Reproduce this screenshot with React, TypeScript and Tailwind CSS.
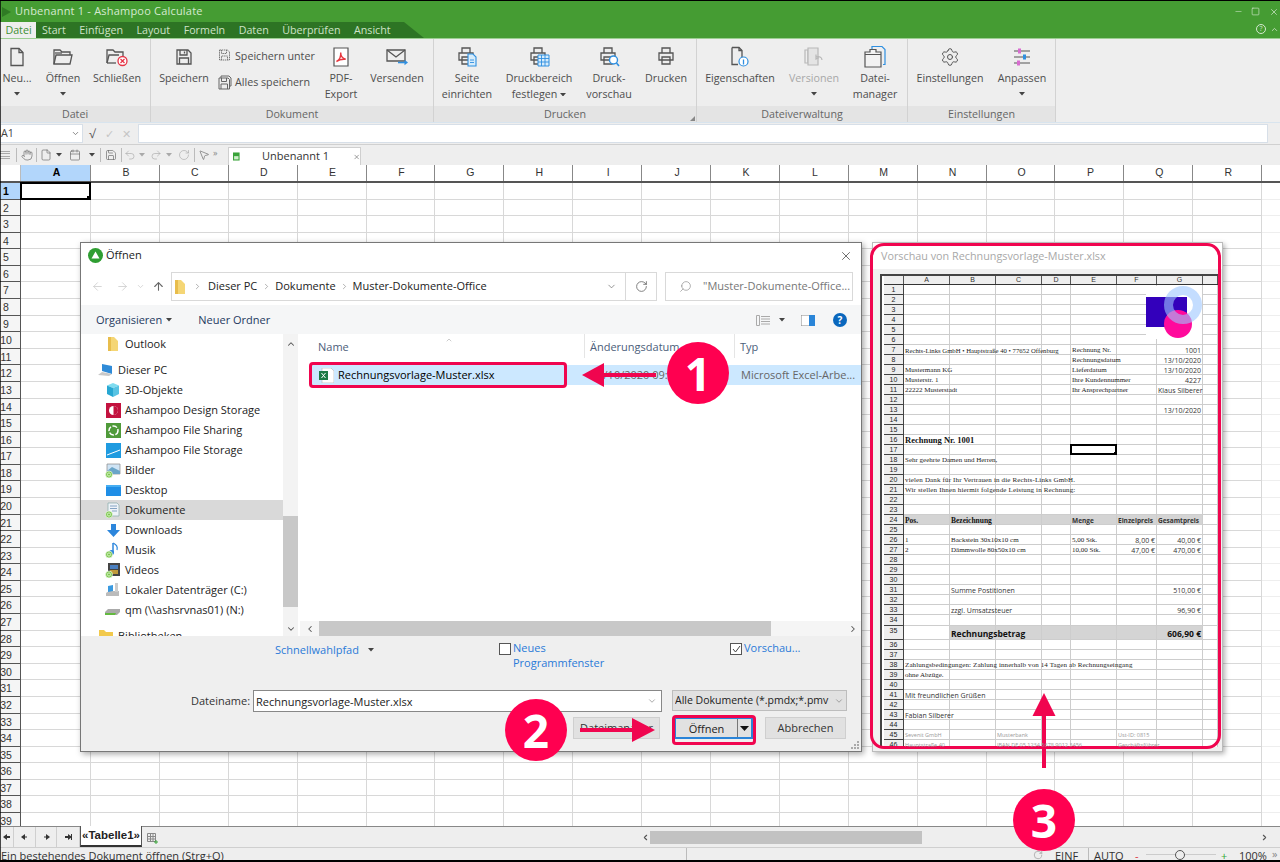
import React from "react";
import { ArrowLeft, ArrowRight, ArrowUp, ChevronDown, ChevronLeft, ChevronRight, ChevronUp, RotateCw, Search, Settings, X, Minus, Square, Undo2, Redo2, Hand, File as FileIcon, Calendar, Save, MousePointer2 } from "lucide-react";

const S = { fill: "none", stroke: "#555", strokeWidth: 1.3 };

function Caret({ className = "" }: { className?: string }) {
  return <svg width="6" height="3.5" viewBox="0 0 7 4" className={className}><path d="M0 0h7L3.5 4z" fill="#444" /></svg>;
}

function IcNew() {
  return <svg width="20" height="20" viewBox="0 0 20 20" {...S}><path d="M4 1.5h8l4 4v13H4z" /><path d="M12 1.5v4h4" /></svg>;
}
function IcOpen() {
  return <svg width="22" height="20" viewBox="0 0 22 20" {...S}><path d="M2 17V3h6l2 2h8v3" /><path d="M2 17l2-9h16l-2 9z" /><path d="M3 6h7" /></svg>;
}
function IcClose() {
  return <svg width="24" height="20" viewBox="0 0 24 20"><g {...S}><path d="M2 16V3h6l2 2h8v5" /><path d="M2 16l2-8h10" /><path d="M2 16h9" /></g><circle cx="17.5" cy="14" r="4.5" fill="#fff" stroke="#e53345" strokeWidth="1.3" /><path d="M15.5 12l4 4M19.5 12l-4 4" stroke="#e53345" strokeWidth="1.2" /></svg>;
}
function IcSave({ size = 18 }: { size?: number }) {
  return <svg width={size} height={size} viewBox="0 0 18 18" {...S}><path d="M2 2h11l3 3v11H2z" /><path d="M5 2v5h7V2M4.5 16v-6h9v6" /><path d="M9.5 3.5v2" /></svg>;
}
function IcSaveAs() {
  return <svg width="14" height="14" viewBox="0 0 14 14" fill="none" stroke="#777" strokeWidth="1" strokeDasharray="1.5 0.7"><path d="M1.5 1h8l2 2v8h-10z" /><path d="M3.5 1v3.5h5V1M3.5 11V7h6v4" /></svg>;
}
function IcSaveAll() {
  return <svg width="15" height="15" viewBox="0 0 15 15" fill="none" stroke="#666" strokeWidth="1"><path d="M3 3V1h8l2 2v8h-2" /><path d="M1 3h9l1.5 1.5V14H1z" /><path d="M3.5 3v3.5h5V3M3 14V9h6.5v5" /></svg>;
}
function IcPdf() {
  return <svg width="16" height="20" viewBox="0 0 16 20"><path d="M1 1h14v18H1z" fill="#fff" stroke="#555" strokeWidth="1.2" /><path d="M3.5 14.5c3-1.5 4.5-5 4.2-9 0 3 1.6 6 5 6.8-3-.3-6.8.5-9.2 2.2z" fill="none" stroke="#e8373f" strokeWidth="1.4" /></svg>;
}
function IcMail() {
  return <svg width="24" height="20" viewBox="0 0 24 20"><g {...S}><path d="M2 3h18v11H2z" /><path d="M2 3l9 7 9-7" /></g><path d="M13 15.5h8" stroke="#2f8fe0" strokeWidth="1.6" /><path d="M19.5 12.8l3.5 2.7-3.5 2.7z" fill="#2f8fe0" /></svg>;
}
function PrinterBase() {
  return <g {...S}><path d="M6 7V2h8v5" /><path d="M3 7h14v7H3z" /><path d="M6 11h8v7H6z" /></g>;
}
function IcPrintPage() {
  return <svg width="22" height="22" viewBox="0 0 22 22"><PrinterBase /><path d="M12 8h5l3 3v9h-8z" fill="#d6ecfb" stroke="#2f8fe0" strokeWidth="1.1" /><path d="M14 14h4M14 16.5h4" stroke="#2f8fe0" strokeWidth=".9" /></svg>;
}
function IcPrintArea() {
  return <svg width="22" height="22" viewBox="0 0 22 22"><PrinterBase /><path d="M10 9h11v11H10z" fill="#d6ecfb" stroke="#2f8fe0" strokeWidth="1" /><path d="M13.5 9v11M17 9v11M10 12.5h11M10 16h11" stroke="#2f8fe0" strokeWidth=".9" /></svg>;
}
function IcPrintPreview() {
  return <svg width="22" height="22" viewBox="0 0 22 22"><PrinterBase /><circle cx="15.5" cy="14" r="4" fill="#fff" stroke="#2f8fe0" strokeWidth="1.4" /><path d="M18.5 17l2.5 3" stroke="#2f8fe0" strokeWidth="1.6" /></svg>;
}
function IcPrint() {
  return <svg width="20" height="22" viewBox="0 0 20 22"><PrinterBase /></svg>;
}
function IcProps() {
  return <svg width="22" height="22" viewBox="0 0 22 22"><g {...S}><path d="M3 1.5h7l3 3v9M3 1.5v17h6" /><path d="M10 1.5v3h3" /></g><circle cx="14.5" cy="15.5" r="4.5" fill="#fff" stroke="#2f8fe0" strokeWidth="1.2" /><path d="M14.5 13.5v5" stroke="#2f8fe0" strokeWidth="1.3" /></svg>;
}
function IcVersions() {
  return <svg width="22" height="22" viewBox="0 0 22 22" fill="none" stroke="#b8b8b8" strokeWidth="1.2"><path d="M2 4h3v13H2z" /><path d="M5 2h10v17H5z" fill="#e4e4e4" /><path d="M19 14c0-3-3-4-6-3M13 8.5V13l3-1.5" /></svg>;
}
function IcFileMgr() {
  return <svg width="24" height="24" viewBox="0 0 24 24" fill="none"><path d="M9 4V1.5h10l3 3v15h-2" stroke="#2f8fe0" strokeWidth="1.2" /><path d="M2 7h5V4.5h6V7h5v15H2z" stroke="#555" strokeWidth="1.2" fill="#f2f2f2" /><path d="M2 9.5h16" stroke="#555" strokeWidth="1" /></svg>;
}
function IcSliders() {
  return <svg width="20" height="20" viewBox="0 0 20 20"><path d="M2 4h16M2 10h16M2 16h16" stroke="#555" strokeWidth="1.2" /><rect x="6" y="1.5" width="3" height="5" fill="#d86cd0" /><rect x="11" y="7.5" width="3" height="5" fill="#2f8fe0" /><rect x="5" y="13.5" width="3" height="5" fill="#d86cd0" /></svg>;
}

function RB({ w, icon, l1, l2, caret, disabled, ml }: { w: string; icon: React.ReactNode; l1: string; l2?: React.ReactNode; caret?: boolean; disabled?: boolean; ml?: string }) {
  return (
    <div className={`${w} ${ml ?? ""} flex flex-col items-center pt-[7px] shrink-0`}>
      <div className="h-[22px] flex items-center justify-center">{icon}</div>
      <div className={`mt-[3px] text-center text-[10.7px] leading-[15.5px] whitespace-nowrap ${disabled ? "text-[#a8a8a8]" : "text-[#4d4d4d]"}`}>
        <div>{l1}</div>
        {l2 ? <div>{l2}</div> : caret ? <div className="flex justify-center items-center h-[15px]"><Caret /></div> : null}
      </div>
    </div>
  );
}

function Group({ w, label, children, grip }: { w: string; label: string; children: React.ReactNode; grip?: boolean }) {
  return (
    <div className={`${w} shrink-0 flex flex-col border-r border-[#d2d2d2] relative`}>
      <div className="h-[67px] flex">{children}</div>
      <div className="h-[16px] bg-[#e4e4e4] text-center text-[10.7px] leading-[16px] text-[#666]">{label}</div>
      {grip && <svg width="5" height="5" viewBox="0 0 5 5" className="absolute right-[1px] bottom-[1px]"><path d="M5 0v5H0z" fill="#888" /></svg>}
    </div>
  );
}

function Ribbon() {
  return (
    <div className="h-[84px] bg-[#eeeeee] flex shrink-0 border-t border-[#9ccf92]">
      <Group w="w-[151px]" label="Datei">
        <RB w="w-[32px]" ml="ml-[1px]" icon={<IcNew />} l1="Neu..." caret />
        <RB w="w-[60px]" icon={<IcOpen />} l1="Öffnen" caret />
        <RB w="w-[48px]" icon={<IcClose />} l1="Schließen" />
      </Group>
      <Group w="w-[283px]" label="Dokument">
        <RB w="w-[54px]" ml="ml-[6px]" icon={<IcSave />} l1="Speichern" />
        <div className="w-[99px] ml-[6px] flex flex-col pt-[4px] text-[10.7px] text-[#4d4d4d] shrink-0">
          <div className="h-[26px] flex items-center gap-[3px] whitespace-nowrap"><span className="w-[14px] ml-[1px]"><IcSaveAs /></span>Speichern unter</div>
          <div className="h-[26px] flex items-center gap-[3px] whitespace-nowrap"><span className="w-[14px] ml-[1px]"><IcSaveAll /></span>Alles speichern</div>
        </div>
        <RB w="w-[50px]" icon={<IcPdf />} l1="PDF-" l2="Export" />
        <RB w="w-[62px]" icon={<IcMail />} l1="Versenden" />
      </Group>
      <Group w="w-[263px]" label="Drucken" grip>
        <RB w="w-[54px]" ml="ml-[6px]" icon={<IcPrintPage />} l1="Seite" l2="einrichten" />
        <RB w="w-[90px]" icon={<IcPrintArea />} l1="Druckbereich" l2={<span className="inline-flex items-center gap-[3px]">festlegen <Caret /></span>} />
        <RB w="w-[50px]" icon={<IcPrintPreview />} l1="Druck-" l2="vorschau" />
        <RB w="w-[60px]" ml="ml-[2px]" icon={<IcPrint />} l1="Drucken" />
      </Group>
      <Group w="w-[211px]" label="Dateiverwaltung">
        <RB w="w-[82px]" ml="ml-[2px]" icon={<IcProps />} l1="Eigenschaften" />
        <RB w="w-[66px]" icon={<IcVersions />} l1="Versionen" caret disabled />
        <RB w="w-[56px]" icon={<IcFileMgr />} l1="Datei-" l2="manager" />
      </Group>
      <Group w="w-[148px]" label="Einstellungen">
        <RB w="w-[72px]" ml="ml-[6px]" icon={<Settings size={20} strokeWidth={1.2} color="#555" />} l1="Einstellungen" />
        <RB w="w-[60px]" ml="ml-[6px]" icon={<IcSliders />} l1="Anpassen" caret />
      </Group>
      <div className="flex-1" />
    </div>
  );
}

function Toolbar() {
  const ic = { size: 12, strokeWidth: 1.3, color: "#666" };
  const dim = { size: 12, strokeWidth: 1.3, color: "#aaa" };
  const Sep = ({ ml }: { ml: string }) => <div className={`w-px h-[14px] bg-[#bbb] shrink-0 ${ml}`} />;
  return (
    <div className="h-[21px] bg-[#eeeeee] border-t border-[#d0d0d0] flex items-center shrink-0 text-[#666]">
      <div className="w-[10px] h-[9px] flex flex-col justify-between shrink-0"><div className="h-px bg-[#aaa]" /><div className="h-px bg-[#aaa]" /><div className="h-px bg-[#aaa]" /><div className="h-px bg-[#aaa]" /></div>
      <Sep ml="ml-[6px]" />
      <div className="w-[19px] flex justify-center"><Hand {...ic} /></div>
      <Sep ml="" />
      <div className="w-[18px] flex justify-center"><FileIcon {...ic} /></div>
      <div className="w-[8px] flex justify-center"><Caret /></div>
      <div className="w-[22px] flex justify-center pl-[2px]"><Calendar {...ic} /></div>
      <div className="w-[3px]" />
      <div className="w-[8px] flex justify-center"><Caret /></div>
      <Sep ml="ml-[4px]" />
      <div className="w-[20px] flex justify-center"><Save {...ic} /></div>
      <Sep ml="" />
      <div className="w-[16px] flex justify-center"><Undo2 {...dim} /></div>
      <div className="w-[8px] flex justify-center"><Caret className="opacity-40" /></div>
      <div className="w-[2px]" />
      <div className="w-[16px] flex justify-center"><Redo2 {...dim} /></div>
      <div className="w-[9px] flex justify-center"><Caret className="opacity-40" /></div>
      <div className="w-[21px] flex justify-center"><RotateCw {...dim} /></div>
      <Sep ml="" />
      <div className="w-[17px] flex justify-center"><MousePointer2 {...ic} /></div>
      <span className="text-[9px] leading-none -mt-[6px] ml-[1px] text-[#888]">»</span>
      <div className="ml-[11px] self-end w-[133px] h-[18px] bg-white border border-b-0 border-[#cfcfcf] flex items-center">
        <svg width="9" height="11" viewBox="0 0 9 11" className="ml-[4px]"><path d="M0 0h9v11H0z" fill="#3aa33a" /><path d="M1.5 5h6v4.5h-6z" fill="#cfeecb" /></svg>
        <span className="ml-[22px] text-[11px] text-[#333] whitespace-nowrap">Unbenannt 1</span>
        <X size={10} strokeWidth={1.8} color="#555" className="ml-[24px]" />
      </div>
    </div>
  );
}

const COLS = "ABCDEFGHIJKLMNOPQR".split("");
const SHEET_GRID = "grid grid-cols-[21px_70px_repeat(17,68.9px)_1fr]";

function Sheet() {
  const rows = Array.from({ length: 39 }, (_, i) => i + 1);
  return (
    <div className="flex-1 flex flex-col bg-white min-h-0 overflow-hidden font-['Liberation_Sans',sans-serif]">
      <div className={`h-[18px] shrink-0 ${SHEET_GRID} border-b-2 border-[#555] bg-white text-[10.5px] text-[#333]`}>
        <div className="border-r border-[#bbb]" />
        {COLS.map((c) => (
          <div key={c} className={`text-center pl-[2px] leading-[15px] border-r border-[#888] ${c === "A" ? "bg-[#b2d6fb] font-bold text-black" : ""}`}>{c}</div>
        ))}
        <div />
      </div>
      <div className={`flex-1 ${SHEET_GRID} grid-rows-[repeat(39,16.58px)] min-h-0 text-[10.5px]`}>
        {rows.map((r) => (
          <React.Fragment key={r}>
            <div className={`border-b border-r border-[#555] leading-[16px] overflow-hidden ${r === 1 ? "bg-[#b2d6fb] font-bold text-black" : "bg-[#f5f5f5] text-[#333]"}`}>
              <div className="w-[12px] text-center">{r}</div>
            </div>
            {COLS.map((c) => (
              <div key={c} className="border-b border-r border-[#d8d8d8] relative">
                {r === 1 && c === "A" && <div className="absolute -inset-[1px] border-2 border-black"><div className="absolute -right-[2px] -bottom-[2px] w-[4px] h-[4px] bg-black" /></div>}
              </div>
            ))}
            <div className="border-b border-[#eee]" />
          </React.Fragment>
        ))}
      </div>
    </div>
  );
}

function SheetTabs() {
  const widths = ["w-[14px]", "w-[22px]", "w-[21px]", "w-[23px]"];
  return (
    <>
      <div className="h-[21px] shrink-0 bg-[#eeeeee] border-t border-[#888] flex items-stretch relative">
        {widths.map((w, i) => (
          <div key={i} className={`${w} border-r border-[#cfcfcf] flex items-center justify-center`}>
            <svg width="7" height="6" viewBox="0 0 7 6">
              {i < 2 ? <path d="M0 3l4-3v6z" fill="#333" /> : <path d="M7 3l-4-3v6z" fill="#333" />}
              {i === 0 && <path d="M4 2h3v2H4z" fill="#333" />}
              {i === 1 && <path d="M4 2.5h2v1H4z" fill="#333" />}
              {i === 2 && <path d="M1 2.5h2v1H1z" fill="#333" />}
              {i === 3 && <path d="M0 2h3v2H0z M6 0h1v6H6z" fill="#333" />}
            </svg>
          </div>
        ))}
        <div className="w-[62px] bg-white border-x border-[#555] border-b-2 border-b-[#333] text-[11.5px] font-bold text-center leading-[18px] text-[#222] -mt-px font-['Liberation_Sans',sans-serif] whitespace-nowrap">«Tabelle1»</div>
        <svg width="11" height="11" viewBox="0 0 11 11" className="ml-[5px] mt-[6px]" fill="none" stroke="#888"><path d="M.5.5h8v8h-8zM.5 3.5h8M.5 6h8M3.5.5v8M6 .5v8" /><path d="M9 7v4M7 9h4" stroke="#3aa33a" /></svg>
        <div className="absolute left-[640px] top-[4px] w-[630px] h-[13px] flex items-center">
          <ChevronLeft size={9} strokeWidth={3} color="#555" className="ml-[1px]" />
          <div className="w-[272px] h-[13px] bg-[#c2c2c2]" />
          <ChevronRight size={9} strokeWidth={3} color="#555" className="ml-auto mr-[1px]" />
        </div>
      </div>
      <div className="h-[15px] shrink-0 bg-[#eeeeee] border-t border-[#cfcfcf] border-b-2 border-b-black flex items-start relative overflow-hidden text-[11px] text-[#333] leading-[15px] whitespace-nowrap">
        <span className="ml-[1px]">Ein bestehendes Dokument öffnen (Strg+O)</span>
        <div className="absolute left-[686px] top-0 w-px h-full bg-[#bbb]" />
        <RotateCw size={10} color="#aaa" className="absolute left-[1033px] top-[2px]" />
        <span className="absolute left-[1055px] top-0">EINF</span>
        <div className="absolute left-[1088px] top-0 w-px h-full bg-[#bbb]" />
        <span className="absolute left-[1094px] top-0">AUTO</span>
        <span className="absolute left-[1135px] top-0 text-[#d34]">-</span>
        <div className="absolute left-[1146px] top-[6px] w-[70px] h-px bg-[#ccc]" />
        <div className="absolute left-[1175px] top-[2px] w-[10px] h-[10px] rounded-full border-[1.5px] border-[#555] bg-[#eee]" />
        <span className="absolute left-[1221px] top-0 text-[#3a3]">+</span>
        <span className="absolute left-[1239px] top-0">100%</span>
        <span className="absolute left-[1272px] -top-[2px] text-[#888]">»</span>
      </div>
    </>
  );
}

function NavItem({ icon, label, selected, indent = "pl-[24px]" }: { icon: React.ReactNode; label: string; selected?: boolean; indent?: string }) {
  return (
    <div className={`h-[20px] flex items-center ${indent} text-[11px] text-[#222] whitespace-nowrap ${selected ? "bg-[#d9d9d9]" : ""}`}>
      <div className="w-[16px] h-[16px] flex items-center justify-center shrink-0 mr-[4px]">{icon}</div>
      {label}
    </div>
  );
}

const Sync = () => (
  <g>
    <circle cx="4" cy="12.5" r="3.5" fill="#7ec850" stroke="#fff" strokeWidth=".6" />
    <circle cx="4" cy="12.5" r="1.6" fill="none" stroke="#e9f7df" strokeWidth=".8" />
  </g>
);
const NavIc = {
  folder: <svg width="12" height="16" viewBox="0 0 12 16"><path d="M1 1h6l4 4v10H1z" fill="#f5d675" /><path d="M1 1h3v14H1z" fill="#e8bd4c" /></svg>,
  pc: <svg width="16" height="16" viewBox="0 0 16 16"><path d="M4 2l10 2v8L4 9z" fill="#2f8bd8" /><path d="M0 13l4-3 10 2-3 2z" fill="#c8c8c8" /></svg>,
  cube: <svg width="16" height="16" viewBox="0 0 16 16"><path d="M8 1l6 2.5L8 6 2 3.5z" fill="#7fdcf0" /><path d="M2 3.5L8 6v9l-6-3z" fill="#27a7d2" /><path d="M14 3.5L8 6v9l6-3z" fill="#58c3e3" /></svg>,
  design: <svg width="15" height="15" viewBox="0 0 15 15"><path d="M0 0h15v15H0z" fill="#c3123f" /><circle cx="7.5" cy="7.5" r="4.5" fill="#fff" /><path d="M7.5 3a4.5 4.5 0 0 1 0 9z" fill="#c3123f" /></svg>,
  share: <svg width="15" height="15" viewBox="0 0 15 15"><path d="M0 0h15v15H0z" fill="#4f9a3a" /><circle cx="7.5" cy="7.5" r="4.5" fill="none" stroke="#fff" strokeWidth="1.5" strokeDasharray="5 1.5" /></svg>,
  store: <svg width="15" height="15" viewBox="0 0 15 15"><path d="M0 0h15v15H0z" fill="#1f9be0" /><path d="M1 12L14 7" stroke="#fff" strokeWidth="1" /></svg>,
  pics: <svg width="16" height="16" viewBox="0 0 16 16"><path d="M2 2h13v10H2z" fill="#cfe4f5" stroke="#888" strokeWidth=".7" /><path d="M2 9l5-4 8 4v3H2z" fill="#6aa5c8" /><Sync /></svg>,
  desktop: <svg width="15" height="15" viewBox="0 0 15 15"><path d="M0 2h15v11H0z" fill="#1f8ee6" /><path d="M0 2h15v2H0z" fill="#47aef2" /></svg>,
  docs: <svg width="16" height="16" viewBox="0 0 16 16"><path d="M3 1h9l2 2v11H3z" fill="#eef3f8" stroke="#8aa" strokeWidth=".7" /><path d="M5 4h7M5 6.5h7M7 9h5" stroke="#6a8fb5" strokeWidth=".8" /><Sync /></svg>,
  down: <svg width="15" height="15" viewBox="0 0 15 15"><path d="M5 1h5v6h4l-6.5 7L1 7h4z" fill="#2c86dc" /></svg>,
  music: <svg width="16" height="16" viewBox="0 0 16 16"><path d="M8 1v10" stroke="#2c86dc" strokeWidth="1.5" /><path d="M8 1c3 2 5 3 4 7" fill="none" stroke="#2c86dc" strokeWidth="1.2" /><circle cx="6.5" cy="10.5" r="2.5" fill="#2c86dc" /><Sync /></svg>,
  video: <svg width="16" height="16" viewBox="0 0 16 16"><path d="M3 1h12v13H3z" fill="#444" /><path d="M5 3h8v4H5z" fill="#4a7fc0" /><path d="M5 8h8v4H5z" fill="#c09a3a" /><Sync /></svg>,
  disk: <svg width="16" height="16" viewBox="0 0 16 16"><path d="M1 11l3-2h10v5H1z" fill="#bbb" /><path d="M10 1h3v9h-3z" fill="#ccc" /><path d="M3 4l5-1v6l-5 1z" fill="#3a9ae0" /></svg>,
  net: <svg width="16" height="16" viewBox="0 0 16 16"><path d="M0 10l3-3h12v3l-3 3H0z" fill="#aaa" /><path d="M0 11h11l-1 2H0z" fill="#63b93f" /></svg>,
};

function OpenDialog() {
  return (
    <div className="absolute left-[80px] top-[242px] w-[782px] h-[510px] bg-white border border-[#777] shadow-[2px_2px_6px_rgba(0,0,0,0.35)] flex flex-col font-['Open_Sans',sans-serif] text-[11px] text-[#222] overflow-hidden">
      <div className="h-[25px] shrink-0 flex items-center pl-[7px] pr-[8px]">
        <svg width="15" height="15" viewBox="0 0 15 15"><circle cx="7.5" cy="7.5" r="7.5" fill="#2f9e32" /><path d="M7.5 3.5l4 7h-8z" fill="#fff" /></svg>
        <span className="ml-[3px]">Öffnen</span>
        <X size={14} strokeWidth={1.2} color="#333" className="ml-auto" />
      </div>
      <div className="h-[37px] shrink-0 flex items-center pl-[10px] pr-[8px]">
        <ArrowLeft size={13} color="#ccc" strokeWidth={1.5} />
        <ArrowRight size={13} color="#ccc" strokeWidth={1.5} className="ml-[12px]" />
        <ChevronDown size={9} color="#ccc" strokeWidth={2} className="ml-[7px]" />
        <ArrowUp size={13} color="#666" strokeWidth={2} className="ml-[7px]" />
        <div className="ml-[6px] w-[486px] h-[29px] border border-[#d9d9d9] flex items-center">
          <div className="flex-1 flex items-center pl-[3px] min-w-0">
            <svg width="10" height="14" viewBox="0 0 10 14"><path d="M0 0h6l4 4v10H0z" fill="#f5d675" /><path d="M0 0h3v14H0z" fill="#e8bd4c" /></svg>
            <ChevronRight size={9} color="#777" strokeWidth={1.5} className="ml-[8px]" />
            <span className="ml-[6px]">Dieser PC</span>
            <ChevronRight size={9} color="#777" strokeWidth={1.5} className="ml-[5px]" />
            <span className="ml-[4px]">Dokumente</span>
            <ChevronRight size={9} color="#777" strokeWidth={1.5} className="ml-[4px]" />
            <span className="ml-[4px]">Muster-Dokumente-Office</span>
          </div>
          <ChevronDown size={11} color="#666" strokeWidth={1.5} className="mr-[8px]" />
          <div className="w-[31px] h-full border-l border-[#d9d9d9] flex items-center justify-center"><RotateCw size={13} color="#666" strokeWidth={1.5} /></div>
        </div>
        <div className="ml-[8px] w-[188px] h-[29px] border border-[#d9d9d9] flex items-center pl-[13px] text-[#777] whitespace-nowrap overflow-hidden">
          <Search size={13} color="#888" strokeWidth={1.2} className="-scale-x-100" />
          <span className="ml-[11px]">"Muster-Dokumente-Office...</span>
        </div>
      </div>
      <div className="h-[29px] shrink-0 bg-[#f5f6f7] flex items-center pl-[15px] pr-[14px] pt-[1px] text-[#1e3a5f]">
        <span>Organisieren</span><Caret className="ml-[4px]" />
        <span className="ml-[26px]">Neuer Ordner</span>
        <svg width="14" height="11" viewBox="0 0 14 11" className="ml-auto" fill="none" stroke="#aaa"><path d="M.5.5h3v10h-3zM5 1.5h9M5 4h9M5 6.5h9M5 9h9" /></svg>
        <Caret className="ml-[9px]" />
        <svg width="14" height="11" viewBox="0 0 14 11" className="ml-[16px]"><path d="M0 0h14v11H0z" fill="#fff" stroke="#888" /><path d="M8 0h6v11H8z" fill="#2a85d8" /></svg>
        <div className="ml-[18px] w-[14px] h-[14px] rounded-full bg-[#0a67bd] text-white text-[10px] font-bold leading-[14px] text-center">?</div>
      </div>
      <div className="h-[302px] shrink-0 flex">
        <div className="w-[202px] shrink-0 overflow-hidden">
          <NavItem icon={NavIc.folder} label="Outlook" />
          <div className="h-[6px]" />
          <NavItem indent="pl-[17px]" icon={NavIc.pc} label="Dieser PC" />
          <NavItem icon={NavIc.cube} label="3D-Objekte" />
          <NavItem icon={NavIc.design} label="Ashampoo Design Storage" />
          <NavItem icon={NavIc.share} label="Ashampoo File Sharing" />
          <NavItem icon={NavIc.store} label="Ashampoo File Storage" />
          <NavItem icon={NavIc.pics} label="Bilder" />
          <NavItem icon={NavIc.desktop} label="Desktop" />
          <NavItem icon={NavIc.docs} label="Dokumente" selected />
          <NavItem icon={NavIc.down} label="Downloads" />
          <NavItem icon={NavIc.music} label="Musik" />
          <NavItem icon={NavIc.video} label="Videos" />
          <NavItem icon={NavIc.disk} label="Lokaler Datenträger (C:)" />
          <NavItem icon={NavIc.net} label="qm (\\ashsrvnas01) (N:)" />
          <div className="h-[6px]" />
          <NavItem indent="pl-[17px]" icon={<svg width="14" height="12" viewBox="0 0 14 12"><path d="M0 0h5l2 2h7v10H0z" fill="#f2c94c" /></svg>} label="Bibliotheken" />
        </div>
        <div className="w-[15px] shrink-0 bg-[#f3f3f3] flex flex-col items-center">
          <ChevronUp size={10} strokeWidth={2.5} color="#555" className="mt-[5px]" />
          <div className="w-full h-[91px] mt-[167px] bg-[#c8c8c8]" />
          <ChevronDown size={10} strokeWidth={2.5} color="#555" className="mt-[17px]" />
        </div>
        <div className="flex-1 flex flex-col min-w-0 ml-[2px]">
          <div className="h-[24px] flex items-end text-[#4c607a] relative shrink-0">
            <div className="absolute left-[145px] top-[2px]"><ChevronUp size={8} color="#999" strokeWidth={1.5} /></div>
            <div className="w-[285px] pl-[18px] h-full flex items-center pt-[3px] border-r border-[#e5e5e5]">Name</div>
            <div className="w-[150px] pl-[5px] h-full flex items-center pt-[3px] border-r border-[#e5e5e5]">Änderungsdatum</div>
            <div className="flex-1 pl-[5px] h-full flex items-center pt-[3px]">Typ</div>
          </div>
          <div className="mt-[7px] ml-[10px] h-[20px] bg-[#cce8ff] flex items-center shrink-0 whitespace-nowrap">
            <svg width="15" height="15" viewBox="0 0 15 15" className="ml-[9px] shrink-0"><path d="M3 0h9l3 3v12H3z" fill="#fff" stroke="#bbb" strokeWidth=".7" /><path d="M0 3h9v9H0z" fill="#1d7a45" /><path d="M2.5 5l4 5M6.5 5l-4 5" stroke="#fff" strokeWidth="1" /></svg>
            <span className="ml-[4px] w-[253px] shrink-0 text-black">Rechnungsvorlage-Muster.xlsx</span>
            <span className="w-[150px] shrink-0 text-[#666]">13/10/2020 09:58</span>
            <span className="text-[#666]">Microsoft Excel-Arbe...</span>
          </div>
          <div className="flex-1" />
          <div className="h-[15px] shrink-0 flex items-center bg-[#f5f5f5]">
            <ChevronLeft size={10} strokeWidth={2.5} color="#555" className="ml-[5px]" />
            <div className="ml-[4px] w-[452px] h-full bg-[#c8c8c8]" />
            <ChevronRight size={10} strokeWidth={2.5} color="#555" className="ml-auto mr-[3px]" />
          </div>
        </div>
      </div>
      <div className="flex-1 bg-[#efefef] relative text-[#333] leading-[15px]">
        <div className="absolute left-[194px] top-[6px] text-[#2a7ad8]">Schnellwahlpfad</div>
        <div className="absolute left-[287px] top-[12px]"><Caret /></div>
        <div className="absolute left-[418px] top-[7px] w-[12px] h-[12px] border border-[#555] bg-white" />
        <div className="absolute left-[432px] top-[4px] text-[#2a7ad8]">Neues<br />Programmfenster</div>
        <div className="absolute left-[649px] top-[7px] w-[12px] h-[12px] border border-[#555] bg-white flex items-center justify-center">
          <svg width="9" height="8" viewBox="0 0 9 8" fill="none" stroke="#444"><path d="M1 4l2.5 3L8 1" /></svg>
        </div>
        <div className="absolute left-[663px] top-[4px] text-[#2a7ad8]">Vorschau...</div>
        <div className="absolute left-[110px] top-[57px] text-[#333]">Dateiname:</div>
        <div className="absolute left-[172px] top-[54px] w-[409px] h-[22px] border border-[#888] bg-white flex items-center pl-[2px] text-[#222]">
          Rechnungsvorlage-Muster.xlsx
          <ChevronDown size={10} color="#777" strokeWidth={1.5} className="ml-auto mr-[4px]" />
        </div>
        <div className="absolute left-[591px] top-[54px] w-[175px] h-[21px] border border-[#bdbdbd] bg-[#e1e1e1] flex items-center pl-[2px] overflow-hidden whitespace-nowrap text-[#222]">
          <span className="w-[156px] overflow-hidden text-[10.5px]">Alle Dokumente (*.pmdx;*.pmv</span>
          <ChevronDown size={10} color="#777" strokeWidth={1.5} className="ml-[3px]" />
        </div>
        <div className="absolute left-[492px] top-[81px] w-[87px] h-[22px] border border-[#cfcfcf] bg-[#e1e1e1] text-center leading-[20px]">Dateimanager</div>
        <div className="absolute left-[593px] top-[81px] w-[79px] h-[22px] border-2 border-[#2a84d8] bg-[#e1e1e1] flex items-center text-[#222]">
          <span className="flex-1 text-center">Öffnen</span>
          <div className="w-[14px] h-full border-l border-[#777] flex items-center justify-center"><svg width="9" height="5" viewBox="0 0 9 5"><path d="M0 0h9L4.5 5z" fill="#111" /></svg></div>
        </div>
        <div className="absolute left-[684px] top-[81px] w-[81px] h-[22px] border border-[#cfcfcf] bg-[#e1e1e1] text-center leading-[20px]">Abbrechen</div>
        <svg width="8" height="8" viewBox="0 0 8 8" className="absolute right-[2px] bottom-[2px]" fill="#aaa"><path d="M6 0h2v2H6zM3 3h2v2H3zM6 3h2v2H6zM0 6h2v2H0zM3 6h2v2H3zM6 6h2v2H6z" /></svg>
      </div>
    </div>
  );
}

type C = { c: number; t: string; k?: string };
const SER = "font-['Liberation_Serif',serif] text-[7px] text-[#222]";
const SAN = "font-['Open_Sans',sans-serif] text-[7px] text-[#333]";
const SANB = "font-['Open_Sans',sans-serif] text-[6.5px] font-bold text-[#333]";
const TINY = "text-[5.5px] text-[#999] font-['Open_Sans',sans-serif]";
const SERB = "font-['Liberation_Serif',serif] font-bold text-[7.5px] text-[#111]";
const SANX = "font-['Open_Sans',sans-serif] font-bold text-[8.5px] text-[#111]";
const R = "text-right";
const cells: Record<number, C[]> = {
  7: [{ c: 1, t: "Rechts-Links GmbH • Hauptstraße 40 • 77652 Offenburg", k: "font-['Liberation_Serif',serif] text-[6.7px] text-[#222]" }, { c: 5, t: "Rechnung Nr.", k: SER }, { c: 7, t: "1001", k: SAN + " " + R }],
  8: [{ c: 5, t: "Rechnungsdatum", k: SER }, { c: 7, t: "13/10/2020", k: SAN + " " + R }],
  9: [{ c: 1, t: "Mustermann KG", k: SER }, { c: 5, t: "Lieferdatum", k: SER }, { c: 7, t: "13/10/2020", k: SAN + " " + R }],
  10: [{ c: 1, t: "Musterstr. 1", k: SER }, { c: 5, t: "Ihre Kundennummer", k: SER }, { c: 7, t: "4227", k: SAN + " " + R }],
  11: [{ c: 1, t: "22222 Musterstadt", k: SER }, { c: 5, t: "Ihr Ansprechpartner", k: SER }, { c: 7, t: "Klaus Silberer", k: SAN }],
  13: [{ c: 7, t: "13/10/2020", k: SAN + " " + R }],
  16: [{ c: 1, t: "Rechnung Nr. 1001", k: "font-['Liberation_Serif',serif] font-bold text-[8.5px] text-[#111]" }],
  18: [{ c: 1, t: "Sehr geehrte Damen und Herren,", k: SER }],
  20: [{ c: 1, t: "vielen Dank für Ihr Vertrauen in die Rechts-Links GmbH.", k: SER + " tracking-[0.15px]" }],
  21: [{ c: 1, t: "Wir stellen Ihnen hiermit folgende Leistung in Rechnung:", k: SER + " tracking-[0.15px]" }],
  24: [{ c: 1, t: "Pos.", k: SERB }, { c: 2, t: "Bezeichnung", k: SERB }, { c: 5, t: "Menge", k: SANB }, { c: 6, t: "Einzelpreis", k: SANB }, { c: 7, t: "Gesamtpreis", k: SANB }],
  26: [{ c: 1, t: "1", k: SER }, { c: 2, t: "Backstein 30x10x10 cm", k: SER }, { c: 5, t: "5,00 Stk.", k: SER }, { c: 6, t: "8,00 €", k: SAN + " " + R }, { c: 7, t: "40,00 €", k: SAN + " " + R }],
  27: [{ c: 1, t: "2", k: SER }, { c: 2, t: "Dämmwolle 80x50x10 cm", k: SER }, { c: 5, t: "10,00 Stk.", k: SER }, { c: 6, t: "47,00 €", k: SAN + " " + R }, { c: 7, t: "470,00 €", k: SAN + " " + R }],
  31: [{ c: 2, t: "Summe Postitionen", k: SAN }, { c: 7, t: "510,00 €", k: SAN + " " + R }],
  33: [{ c: 2, t: "zzgl. Umsatzsteuer", k: SAN }, { c: 7, t: "96,90 €", k: SAN + " " + R }],
  35: [{ c: 2, t: "Rechnungsbetrag", k: SANX }, { c: 7, t: "606,90 €", k: SANX + " text-right" }],
  38: [{ c: 1, t: "Zahlungsbedingungen: Zahlung innerhalb von 14 Tagen ab Rechnungseingang", k: SER + " tracking-[0.1px]" }],
  39: [{ c: 1, t: "ohne Abzüge.", k: SER }],
  41: [{ c: 1, t: "Mit freundlichen Grüßen", k: SAN }],
  43: [{ c: 1, t: "Fabian Silberer", k: SAN }],
  45: [{ c: 1, t: "Sevenit GmbH", k: TINY }, { c: 3, t: "Musterbank", k: TINY }, { c: 6, t: "Ust-ID: 0815", k: TINY }],
  46: [{ c: 1, t: "Hauptstraße 40", k: TINY }, { c: 3, t: "IBAN DE 05 1234 5678 9012 3456", k: TINY }, { c: 6, t: "Geschäftsführer", k: TINY }],
};

const GRID = "grid grid-cols-[20px_46px_46px_46px_29px_46px_40px_46px_15px]";

function PreviewSheet() {
  const hdr = ["", "A", "B", "C", "D", "E", "F", "G", ""];
  return (
    <div className="w-[338px] h-[473px] bg-white border-l-2 border-t-2 border-[#444] pl-[2px] overflow-hidden font-['Liberation_Sans',sans-serif]">
      <div className={`${GRID} h-[9px] bg-[#eee] border-b border-[#333]`}>
        {hdr.map((h, i) => <div key={i} className="border-r border-[#555] text-[7px] leading-[8px] text-center text-[#333]">{h}</div>)}
      </div>
      {Array.from({ length: 46 }, (_, i) => i + 1).map((r) => {
        const h = r === 34 ? "h-[11px]" : r === 35 ? "h-[14px]" : "h-[10px]";
        const band = r === 24 || r === 35;
        return (
          <div key={r} className={`${GRID} ${h}`}>
            {Array.from({ length: 9 }, (_, c) => {
              const item = cells[r]?.find((x) => x.c === c);
              if (c === 0) return <div key={c} className="bg-[#eee] border-b border-r border-[#444] text-[7px] leading-[10px] text-center text-[#222] overflow-hidden">{r}</div>;
              return (
                <div key={c} className={`relative border-b border-r border-[#cdcdcd] ${band && c >= (r === 35 ? 2 : 1) && c <= 7 ? "bg-[#d4d4d4]" : ""}`}>
                  {item && (
                    <div className={`absolute z-10 inset-x-[1px] top-[1px] whitespace-nowrap ${r === 35 ? "leading-[13px]" : "leading-[9px]"} ${item.k ?? ""}`}>{item.t}</div>
                  )}
                  {r === 17 && c === 5 && <div className="absolute -inset-[1px] border-2 border-black"><div className="absolute -right-[2px] -bottom-[2px] w-[3px] h-[3px] bg-black" /></div>}
                </div>
              );
            })}
          </div>
        );
      })}
    </div>
  );
}

function PreviewPane() {
  return (
    <div className="absolute left-[872px] top-[242px] w-[351px] h-[510px] bg-white border border-[#bbb] shadow-[2px_2px_5px_rgba(0,0,0,0.3)] flex flex-col overflow-hidden">
      <div className="h-[26px] shrink-0 pl-[8px] flex items-center text-[10.8px] text-[#a8a8a8] font-['Open_Sans',sans-serif] whitespace-nowrap">Vorschau von Rechnungsvorlage-Muster.xlsx</div>
      <div className="flex-1 bg-[#f0f0f0] pt-[5px] pl-[7px] relative min-h-0">
        <PreviewSheet />
        <svg width="56" height="53" viewBox="0 0 56 53" className="absolute z-20 left-[273px] top-[17px]">
          <path d="M0 0h56v53H0z" fill="#fff" />
          <path d="M0 11h41v30H0z" fill="#3300bb" />
          <circle cx="32" cy="38" r="14" fill="#ff0a9c" />
          <circle cx="37" cy="19" r="14.5" fill="none" stroke="#9cc6ff" strokeOpacity=".6" strokeWidth="9" />
        </svg>
      </div>
    </div>
  );
}

function Badge({ n, x, y }: { n: string; x: string; y: string }) {
  return (
    <div className={`absolute ${x} ${y} w-[62px] h-[62px] rounded-full bg-[#ff0050] flex items-center justify-center text-white font-bold text-[46px] leading-none font-['Open_Sans',sans-serif]`}>{n}</div>
  );
}

function Annotations() {
  return (
    <>
      <div className="absolute left-[309px] top-[362px] w-[258px] h-[26px] border-[3px] border-[#f0054f] rounded-[4px]" />
      <div className="absolute left-[672px] top-[715px] w-[84px] h-[30px] border-[3px] border-[#f0054f] rounded-[4px]" />
      <div className="absolute left-[870px] top-[243px] w-[351px] h-[506px] border-[3px] border-[#f0054f] rounded-[14px]" />
      <svg width="1280" height="862" viewBox="0 0 1280 862" className="absolute left-0 top-0 pointer-events-none">
        <path d="M600 375h56" stroke="#f0054f" strokeWidth="4" />
        <path d="M582 375l22-12v24z" fill="#f0054f" />
        <path d="M580 730h56" stroke="#f0054f" strokeWidth="4" />
        <path d="M655 730l-23-12v24z" fill="#f0054f" />
        <path d="M1044 768v-54" stroke="#f0054f" strokeWidth="4" />
        <path d="M1044 693l-11.5 23h23z" fill="#f0054f" />
      </svg>
      <Badge n="1" x="left-[667px]" y="top-[342px]" />
      <Badge n="2" x="left-[505px]" y="top-[699px]" />
      <Badge n="3" x="left-[1013px]" y="top-[789px]" />
    </>
  );
}

export default function App() {
  const tabs = ["Start", "Einfügen", "Layout", "Formeln", "Daten", "Überprüfen", "Ansicht"];
  return (
    <div className="relative w-[1280px] h-[862px] overflow-hidden flex flex-col bg-white font-['Open_Sans',sans-serif]">
      <div className="h-px shrink-0 bg-black" />
      <div className="h-[37px] shrink-0 bg-[#459c33] flex flex-col">
        <div className="h-[21px] flex items-center text-[11px] text-[#d5ead0] relative">
          <svg width="10" height="12" viewBox="0 0 10 12" className="ml-[2px]"><path d="M0 1l9 5-9 5z" fill="#2f7a24" /></svg>
          <span className="ml-[3px] tracking-[0.2px]">Unbenannt 1 - Ashampoo Calculate</span>
          <Minus size={9} color="#cfe6ca" strokeWidth={1.5} className="absolute right-[37px] top-[6px]" />
          <Square size={9} color="#e5f2e2" strokeWidth={1.5} className="absolute right-[20px] top-[6px]" />
          <X size={10} color="#e5f2e2" strokeWidth={1.5} className="absolute right-[1px] top-[6px]" />
        </div>
        <div className="h-[16px] flex text-[10.7px] text-[#cde3c8] relative">
          <div className="w-[36px] bg-[#eeeeee] text-[#3f8f34] text-center leading-[16px] pl-[1px]">Datei</div>
          <div className="relative w-[388px] h-[16px] flex items-center">
            <svg width="388" height="16" viewBox="0 0 388 16" className="absolute left-0 top-0"><path d="M0 0h368l20 16H0z" fill="#2d7424" /></svg>
            {tabs.map((t, i) => (
              <span key={t} className={`relative whitespace-nowrap ${i === 0 ? "ml-[6px]" : "ml-[13.5px]"}`}>{t}</span>
            ))}
          </div>
          <div className="absolute right-[14px] top-[2px] w-[10px] h-[10px] rounded-full border border-[#d5ead0] text-[7px] leading-[8px] text-center">?</div>
          <ChevronUp size={9} color="#d5ead0" className="absolute right-[1px] top-[3px]" />
        </div>
      </div>
      <Ribbon />
      <div className="h-[22px] bg-[#eeeeee] shrink-0 border-t border-[#d8e4ee] flex items-center">
        <div className="w-[83px] h-[19px] bg-white border border-[#d7dfe8] flex items-center text-[10.7px] text-[#444]">
          A1
          <ChevronDown size={9} color="#666" strokeWidth={2} className="ml-auto mr-[2px]" />
        </div>
        <span className="ml-[6px] w-[10px] text-[12px] text-[#555] leading-none">√</span>
        <span className="ml-[6px] w-[11px] text-[11px] text-[#c5c5c5] leading-none">✓</span>
        <span className="ml-[6px] w-[10px] text-[11px] text-[#c5c5c5] leading-none">✕</span>
        <div className="ml-[6px] w-[1130px] h-[19px] bg-white border border-[#d7dfe8]" />
      </div>
      <Toolbar />
      <Sheet />
      <SheetTabs />
      <OpenDialog />
      <PreviewPane />
      <Annotations />
      <div className="absolute left-0 top-0 w-px h-full bg-black/70" />
    </div>
  );
}
